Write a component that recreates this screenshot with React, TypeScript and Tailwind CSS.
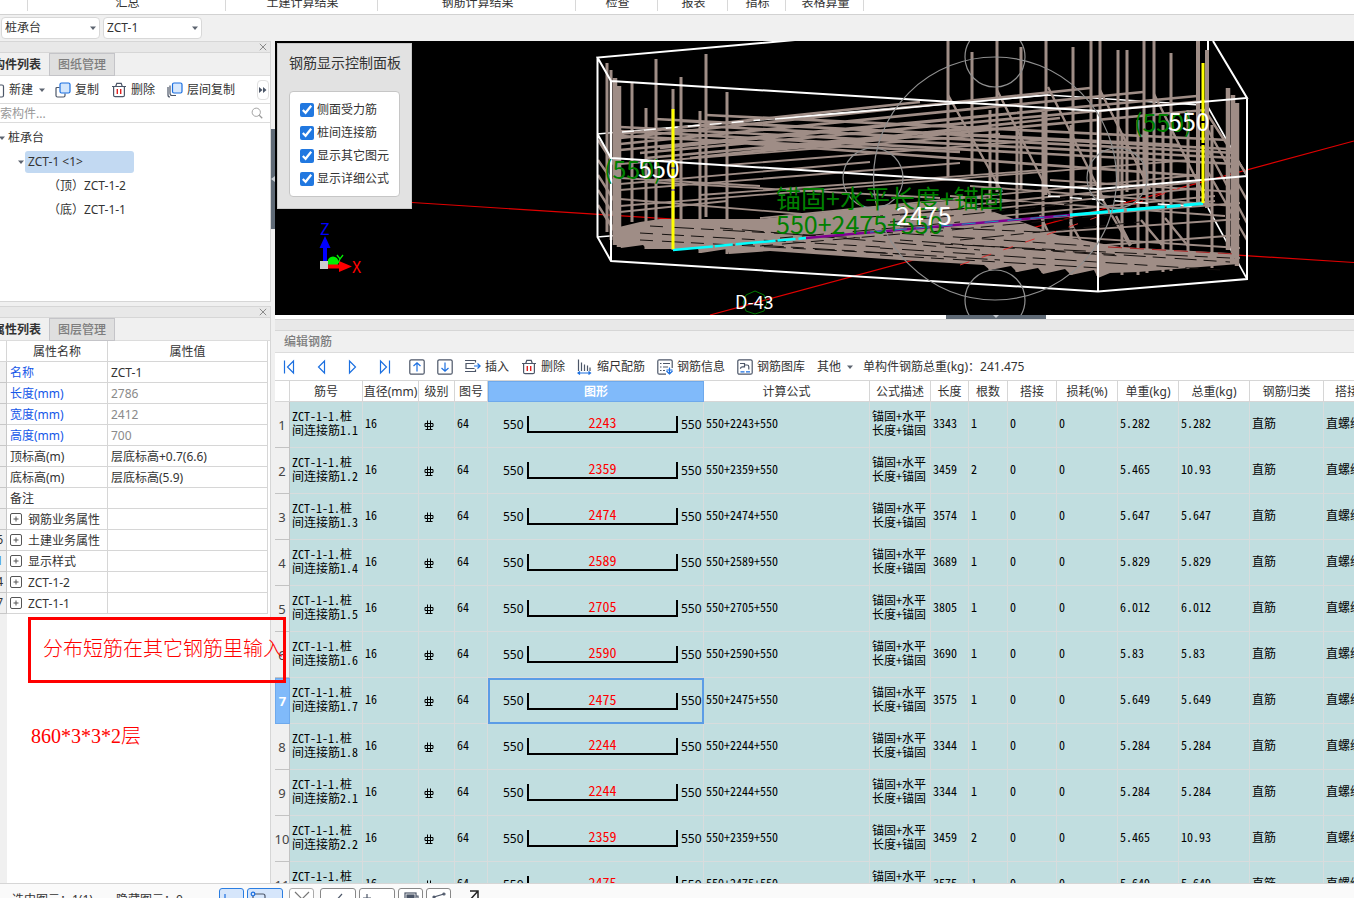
import React from "react";

const UI = "font-['Noto_Sans','Noto_Sans_CJK_SC',sans-serif]";

const ribbon = [
  { label: "", w: "w-7" },
  { label: "汇总", w: "w-[198px]" },
  { label: "土建计算结果", w: "w-[152px]" },
  { label: "钢筋计算结果", w: "w-[198px]" },
  { label: "检查", w: "w-[82px]" },
  { label: "报表", w: "w-[70px]" },
  { label: "指标", w: "w-[58px]" },
  { label: "表格算量", w: "w-[78px]" },
];

type Prop = { no: string; name: string; value: string; kind: "link" | "plain" | "group"; dim?: boolean };
const props: Prop[] = [
  { no: "", name: "名称", value: "ZCT-1", kind: "link" },
  { no: "", name: "长度(mm)", value: "2786", kind: "link", dim: true },
  { no: "", name: "宽度(mm)", value: "2412", kind: "link", dim: true },
  { no: "", name: "高度(mm)", value: "700", kind: "link", dim: true },
  { no: "", name: "顶标高(m)", value: "层底标高+0.7(6.6)", kind: "plain" },
  { no: "", name: "底标高(m)", value: "层底标高(5.9)", kind: "plain" },
  { no: "", name: "备注", value: "", kind: "plain" },
  { no: "", name: "钢筋业务属性", value: "", kind: "group" },
  { no: "16", name: "土建业务属性", value: "", kind: "group" },
  { no: "21", name: "显示样式", value: "", kind: "group" },
  { no: "24", name: "ZCT-1-2", value: "", kind: "group" },
  { no: "27", name: "ZCT-1-1", value: "", kind: "group" },
];

const rows = [
  ["1.1", "2243", "3343", "1", "5.282", "5.282"],
  ["1.2", "2359", "3459", "2", "5.465", "10.93"],
  ["1.3", "2474", "3574", "1", "5.647", "5.647"],
  ["1.4", "2589", "3689", "1", "5.829", "5.829"],
  ["1.5", "2705", "3805", "1", "6.012", "6.012"],
  ["1.6", "2590", "3690", "1", "5.83", "5.83"],
  ["1.7", "2475", "3575", "1", "5.649", "5.649"],
  ["1.8", "2244", "3344", "1", "5.284", "5.284"],
  ["2.1", "2244", "3344", "1", "5.284", "5.284"],
  ["2.2", "2359", "3459", "2", "5.465", "10.93"],
  ["2.3", "2475", "3575", "1", "5.649", "5.649"],
];

const columns = ["筋号", "直径(mm)", "级别", "图号", "图形", "计算公式", "公式描述", "长度", "根数", "搭接", "损耗(%)", "单重(kg)", "总重(kg)", "钢筋归类", "搭接形式"];

function Icon({ children, className = "size-4" }: { children: React.ReactNode; className?: string }) {
  return (
    <svg viewBox="0 0 16 16" className={`${className} shrink-0`} fill="none" stroke="#4c5668" strokeWidth="1.2" aria-hidden="true">
      {children}
    </svg>
  );
}

const Trash = () => (
  <Icon>
    <path d="M1 4.500h14M4.800 4.300L5.800 1.300h4.400l1 3M2.600 4.500v8.700q0 1.500 1.500 1.500h7.800q1.500 0 1.500-1.500V4.500" />
    <path d="M6.300 7v5M9.700 7v5" stroke="#e02020" strokeWidth="1.400" />
  </Icon>
);

const Copy = () => (
  <Icon>
    <path d="M4.500 5.500H2q-1 0-1 1v7q0 1.500 1.500 1.500h6q1.500 0 1.500-1.500v-2" />
    <rect x="5" y="1" width="10" height="10" rx="1.500" fill="#d3e6fc" stroke="#1b6fe0" />
  </Icon>
);

const LayerCopy = () => (
  <Icon>
    <path d="M1 5v8q0 2 2 2M3 3.500v7.500q0 2.500 2 2.500h4" />
    <rect x="5.500" y="1" width="9.500" height="10" rx="1.500" fill="#d9e9fd" stroke="#1b6fe0" />
  </Icon>
);

const Down = () => (
  <svg viewBox="0 0 6 4" className="h-1 w-1.5 shrink-0" aria-hidden="true">
    <path d="M0 .5h6L3 4z" fill="#5d6470" />
  </svg>
);

function PanelTitle() {
  return (
    <div className="flex h-3 items-center justify-end border-y border-[#d6d6d6] bg-[#e8e8e8] pr-[3px]">
      <button aria-label="关闭" className="size-2">
        <svg viewBox="0 0 8 8" className="size-2" stroke="#8a8a8a"><path d="M.8.8l6.400 6.400M7.200.8L.8 7.200" /></svg>
      </button>
    </div>
  );
}

function Tabs({ active, other }: { active: string; other: string }) {
  return (
    <div role="tablist" className="flex h-[23px] border-b border-[#dcdcdc] bg-[#f0f0f0]">
      <button role="tab" aria-selected="true" className="flex w-[49px] items-center justify-end overflow-hidden pt-0.5 pr-2 font-bold whitespace-nowrap">{active}</button>
      <button role="tab" aria-selected="false" className="h-[23px] w-[66px] border border-[#c4c4c8] bg-[#dfdfdf] font-medium text-[#7d7d7d]">{other}</button>
    </div>
  );
}

function Picker({ label, value }: { label: string; value: string }) {
  return (
    <div className="relative h-[22px] w-[99px]">
      <select aria-label={label} className="h-full w-full appearance-none rounded border border-[#d8d8d8] bg-white pl-[3px]">
        <option>{value}</option>
      </select>
      <span className="pointer-events-none absolute inset-y-0 right-1 flex items-center"><Down /></span>
    </div>
  );
}

function ToolButton({ icon, children }: { icon: React.ReactNode; children: React.ReactNode }) {
  return <button className="flex shrink-0 items-center gap-1 whitespace-nowrap">{icon}<span className="pt-px">{children}</span></button>;
}

type Seg = [number, number, number, number];
const lines = (segs: Seg[]) => segs.map(([a, b, c, d]) => `M${a} ${b}L${c} ${d}`).join("");

const leftBars: Seg[] = [
  [607, 63, 607, 232], [611, 70, 611, 240], [632, 82, 632, 222], [646, 108, 646, 249], [656, 59, 656, 221],
  [673, 89, 673, 250], [681, 77, 681, 220], [700, 111, 700, 253], [706, 54, 706, 217], [727, 92, 727, 254],
];
const rightBars: Seg[] = [
  [948, 41, 948, 177], [972, 52, 972, 176], [997, 41, 997, 192], [1021, 47, 1021, 190], [1046, 41, 1046, 195],
  [1073, 47, 1073, 195], [1091, 41, 1091, 190], [1100, 41, 1100, 195], [1118, 50, 1118, 190], [1127, 50, 1127, 192],
  [1144, 41, 1144, 195], [1154, 41, 1154, 200], [1171, 53, 1171, 200], [990, 110, 990, 270], [1017, 130, 1017, 272],
  [1043, 112, 1043, 273], [1071, 125, 1071, 275], [1098, 110, 1098, 276], [1122, 133, 1122, 275], [1138, 120, 1138, 275],
  [1147, 130, 1147, 273], [1163, 125, 1163, 272], [1171, 120, 1171, 271], [1188, 110, 1188, 269], [1212, 125, 1212, 268],
];
const upperMesh: Seg[] = [
  [620, 138, 1090, 88], [620, 144, 1143, 92], [620, 150, 1197, 96], [640, 153, 1205, 101], [727, 154, 1205, 110],
  [620, 134, 920, 102], [660, 148, 1100, 105], [690, 158, 1060, 118],
  [655, 119, 1228, 149], [706, 115, 1228, 140], [620, 127, 1235, 158], [620, 131, 1235, 164], [700, 126, 1235, 153],
  [681, 121, 1180, 145], [727, 142, 1200, 176], [620, 136, 960, 152],
  [646, 158, 980, 128],
];
const midMesh: Seg[] = [
  [620, 164, 1000, 134], [727, 165, 1043, 140],
  [620, 184, 870, 162], [620, 190, 960, 163], [620, 206, 1190, 160], [646, 182, 940, 198], [620, 199, 900, 222],
  [700, 195, 1043, 170], [620, 178, 760, 186], [620, 212, 727, 201], [760, 218, 1197, 175], [800, 222, 1197, 182],
  [820, 226, 1200, 188], [850, 230, 1215, 196], [900, 232, 1215, 201], [950, 196, 1225, 216], [970, 186, 1235, 206],
  [990, 222, 1240, 203], [1010, 235, 1240, 219], [1040, 250, 1240, 235], [990, 232, 1240, 248], [960, 238, 1240, 258],
  [1050, 180, 1235, 192],
];
const depthBars: Seg[] = [
  [948, 95, 1002, 192], [997, 90, 1050, 195], [1048, 87, 1104, 200], [1100, 90, 1150, 190], [1154, 94, 1210, 207],
  [1098, 192, 1130, 246], [1116, 216, 1131, 245], [1141, 220, 1162, 245], [1165, 218, 1188, 246], [990, 222, 1000, 242], [1040, 215, 1052, 240], [1070, 222, 1082, 243],
  [1208, 115, 1247, 175], [1208, 130, 1247, 200], [1208, 150, 1247, 223], [1208, 172, 1247, 240],
  [598, 160, 620, 192], [598, 175, 620, 210], [598, 190, 620, 225], [598, 205, 620, 240], [598, 140, 620, 174],
];
const slits: Seg[] = [
  [650, 226, 860, 238], [640, 233, 880, 247], [640, 240, 900, 254], [720, 228, 980, 250], [740, 244, 1000, 260],
  [880, 232, 1090, 246], [900, 240, 1120, 256], [880, 248, 1220, 270], [940, 244, 1230, 258], [880, 255, 1100, 268],
  [1000, 247, 1230, 262], [760, 246, 900, 234], [780, 238, 960, 222], [900, 226, 1040, 232],
  [890, 222, 1090, 202], [900, 215, 1090, 196], [870, 217, 980, 207], [930, 232, 1120, 214], [960, 240, 1140, 222],
];

function Scene() {
  return (
    <svg viewBox="275 41 1079 274" preserveAspectRatio="xMinYMin slice" className="size-full" fill="none" role="img" aria-label="钢筋三维">
      <path d="M412 202.500L1354 262.500M710 315L1354 141" stroke="#e00000" strokeWidth="1.200" />
      <path d="M597 134L1048 95L1200 105M1208 107L1247 176M1208 208L1247 279M597 237L622 235" stroke="#fff" strokeWidth="1.600" />
      <g stroke="#9f8d86">
        <path d={lines(midMesh)} strokeWidth="1.800" />
        <path d={lines(upperMesh)} strokeWidth="2.700" />
        <path d={lines(depthBars)} strokeWidth="2.400" />
        <path d={lines(leftBars)} strokeWidth="3" />
        <path d={lines(rightBars)} strokeWidth="3" />
        <path d="M615 78V245M619 86V247M1228 88V250M1233 95V258M1237 103V266" strokeWidth="4.500" />
        <path d="M1198 41V205M1207 50V208" strokeWidth="4" />
      </g>
      <path d="M606 215L615 228L640 222L660 219L760 219L880 206L960 200L1000 214L1060 236L1120 247L1230 253L1239 264L1188 268L1138 272L1110 273L1098 278L1094 270L1071 275L1065 269L1043 274L1038 268L1017 272L1011 266L990 270L984 265L900 260L770 251L729 254L727 249L701 253L698 249L647 249L643 245L621 248Z" fill="#9f8d86" />
      <path d={lines(slits)} stroke="#15110f" strokeWidth="1" strokeDasharray="13 9 22 7" />
      <path d="M960 265L1180 188" stroke="#d33" strokeWidth="1" strokeDasharray="10 13" />
      <path d="M1108 247L1235 254" stroke="#a22" strokeWidth="1" strokeDasharray="14 8" />
      <path d="M1048 196L1200 207M622 132L760 120" stroke="#fff" strokeWidth="1.400" strokeDasharray="12 10" />
      <path d="M775 119L920 106.500L1048 95" stroke="#fff" strokeWidth="1.600" />
      <path d="M795 40L597.500 57.500L611 81L1098 111L1247 98L1213 41M1208 41V50M597.500 57V237L611 261L1098 291.500L1247 279V98M611 81V261M1098 111V291M597.500 134L611 158L1098 189L1247 176" stroke="#fff" strokeWidth="2" />
      <path d="M673 250L806 238" stroke="#0ff" strokeWidth="2.500" strokeDasharray="40 2 18 3" />
      <path d="M806 238L1070 215" stroke="#800090" strokeWidth="2.500" />
      <path d="M870 232L1070 215" stroke="#13a0b8" strokeWidth="1" strokeDasharray="14 9" />
      <path d="M1070 215L1203 203.500" stroke="#0ff" strokeWidth="3" strokeDasharray="38 2 14 3" />
      <path d="M673 109V250M1203 63V203" stroke="#ff0" strokeWidth="3" strokeDasharray="58 2 20 2" />
      <g stroke="#8f8f8f" strokeWidth="1.200">
        <circle cx="995" cy="178.500" r="121.500" />
        <circle cx="873" cy="178" r="30" />
        <circle cx="1117" cy="178" r="30" />
        <circle cx="995" cy="57" r="30" />
        <circle cx="995" cy="300" r="30" />
      </g>
      <path d="M755 291L764 295L767 303L764 311L755 314L746 311L743 303L746 295Z" stroke="#007a00" />
      <g className="font-['Noto_Sans_CJK_SC',sans-serif] text-[25px]">
        <g fill="#008000">
          <text x="604" y="179">(550)</text>
          <text x="1134" y="132">(550)</text>
          <text x="776" y="208">锚固+水平长度+锚固</text>
          <text x="776" y="234">550+2475+550</text>
        </g>
        <g fill="#fff">
          <text x="638" y="178">550</text>
          <text x="1168" y="131">550</text>
          <text x="896" y="225">2475</text>
          <text x="735" y="309" className="text-[18px]">D-43</text>
        </g>
      </g>
      <circle cx="333" cy="262" r="5.500" fill="#00f000" />
      <path d="M325 236L330.500 248H327V263H323V248H319.500Z" fill="#00f" />
      <path d="M327 264.500H339V261L352 266.500L339 272V268.500H327Z" fill="#f00" />
      <rect x="320" y="261" width="8" height="8" fill="#ccc" />
      <path d="M337 255L340 259L343 255M340 259L338 263" stroke="#00f000" strokeWidth="1.300" />
      <g className="font-['Noto_Sans_CJK_SC',sans-serif] text-[16px]">
        <text x="320" y="235" fill="#00f">Z</text>
        <text x="352" y="273" fill="#f00">X</text>
      </g>
    </svg>
  );
}

function DisplayPanel() {
  return (
    <section className="absolute top-0.5 left-0.5 w-[135px] border border-[#c8c8c8] bg-[#e2e2e2] px-[11px] pt-[7px] pb-[11px]">
      <h2 className="text-sm leading-6 whitespace-nowrap text-[#333]">钢筋显示控制面板</h2>
      <div className="mt-4 flex flex-col rounded-sm border border-[#c6c6c6] bg-white px-2.5 py-1.5">
        {["侧面受力筋", "桩间连接筋", "显示其它图元", "显示详细公式"].map((t) => (
          <label key={t} className="flex h-[23px] items-center gap-[3px] whitespace-nowrap">
            <input type="checkbox" defaultChecked className="size-3.5 shrink-0 accent-[#2178e0]" />
            <span className="pt-px">{t}</span>
          </label>
        ))}
      </div>
    </section>
  );
}

const half = "font-['Noto_Sans_CJK_SC',sans-serif] [font-feature-settings:'hwid']";

function Num({ children }: { children: React.ReactNode }) {
  return <span className={half}>{children}</span>;
}

function RebarTable() {
  const head = "h-[21px] border-r border-b border-[#d6d6d6] p-0 pt-px text-center font-normal";
  const cell = "border-r border-b border-[#d8dcdd] p-0 pb-[3px] pl-0.5";
  return (
    <table className="w-[1159px] table-fixed border-separate border-spacing-0 whitespace-nowrap">
      <colgroup>
        <col className="w-[15px]" /><col className="w-[73px]" /><col className="w-14" /><col className="w-9" /><col className="w-[33px]" />
        <col className="w-[216px]" /><col className="w-[166px]" /><col className="w-[61px]" /><col className="w-[38px]" /><col className="w-[39px]" />
        <col className="w-[49px]" /><col className="w-[61px]" /><col className="w-[61px]" /><col className="w-[71px]" /><col className="w-[74px]" /><col className="w-[110px]" />
      </colgroup>
      <thead>
        <tr>
          <th className={head} aria-label="行号" />
          {columns.map((c) => (
            <th key={c} className={c === "图形" ? "h-[21px] border border-[#6ea9ec] bg-[#80bafa] p-0 text-center font-bold text-white" : c === "搭接形式" ? "h-[21px] border-b border-[#d6d6d6] p-0 pt-px pl-[11px] text-left font-normal" : head}>{c}</th>
          ))}
        </tr>
      </thead>
      <tbody className="bg-[#c1dee0] font-['Noto_Sans_CJK_SC',sans-serif] leading-[14px] text-black">
        {rows.map(([name, len, total, count, unit, sum], i) => {
          const on = i === 6;
          return (
            <tr key={i} className="h-[46px]">
              <th className={`${UI} ${on ? "border border-[#6ea9ec] bg-[#80bafa] p-0 font-bold text-white" : "border-r border-b border-[#c3c3c3] bg-[#f0f0f0] p-0 font-normal text-[#444]"}`}>
                <div className="-mx-1 text-center text-[13px]">{i + 1}</div>
              </th>
              <td className={cell}><Num>ZCT-1-1.</Num>桩<br />间连接筋<Num>{name}</Num></td>
              <td className={cell}><Num>16</Num></td>
              <td className={cell}>
                <svg viewBox="0 0 10 10" className="mt-1 ml-[3px] size-2.5" fill="none" stroke="#000" aria-label="三级钢">
                  <path d="M1 3.500h8v3H1zM3.500.5v9M6.500.5v9M1.500 9.500h7" />
                </svg>
              </td>
              <td className={cell}><Num>64</Num></td>
              <td className={on ? "border-2 border-[#5b9ce6] p-0" : "border-r border-b border-[#d8dcdd] p-0"}>
                <div className={on ? `flex items-center pl-[13px] ${UI}` : `flex items-center pl-[15px] ${UI}`}>
                  <span className="w-6">550</span>
                  <span className={`h-[17px] w-[151px] border-x-2 border-b-2 border-black text-center text-sm leading-3 text-[#f00] ${half}`}>{len}</span>
                  <span className="pl-[3px]">550</span>
                </div>
              </td>
              <td className={cell}><Num>550+{len}+550</Num></td>
              <td className={cell}>锚固<Num>+</Num>水平<br />长度<Num>+</Num>锚固</td>
              <td className={cell}><Num>{total}</Num></td>
              <td className={cell}><Num>{count}</Num></td>
              <td className={cell}><Num>0</Num></td>
              <td className={cell}><Num>0</Num></td>
              <td className={cell}><Num>{unit}</Num></td>
              <td className={cell}><Num>{sum}</Num></td>
              <td className={cell}>直筋</td>
              <td className={cell}>直螺纹连接</td>
            </tr>
          );
        })}
      </tbody>
    </table>
  );
}

function EditToolbar() {
  const blue = "#1b6fe0";
  return (
    <div className="flex h-7 shrink-0 items-center gap-3 overflow-hidden border-b border-[#d6d6d6] bg-white pl-1.5">
      <div className="flex gap-4">
        <button aria-label="第一条"><Icon><path d="M3.500 1.500v13M12.500 2v12L6.500 8z" stroke={blue} /></Icon></button>
        <button aria-label="上一条"><Icon><path d="M11.500 2v12L5.500 8z" stroke={blue} /></Icon></button>
        <button aria-label="下一条"><Icon><path d="M4.500 2v12l6-6z" stroke={blue} /></Icon></button>
        <button aria-label="最后一条"><Icon><path d="M12.500 1.500v13M3.500 2v12L9.500 8z" stroke={blue} /></Icon></button>
        <button aria-label="上移"><Icon><rect x=".8" y=".8" width="14.400" height="14.400" rx="1.500" /><path d="M8 12.500V4M4.500 7L8 3.800L11.500 7" stroke={blue} /></Icon></button>
      </div>
      <button aria-label="下移"><Icon><rect x=".8" y=".8" width="14.400" height="14.400" rx="1.500" /><path d="M8 3.500V12M4.500 9L8 12.200L11.500 9" stroke={blue} /></Icon></button>
      <ToolButton icon={<Icon><path d="M0 1.500h10.500v2M0 12.500h10.500v-2M9.500 9.500H1v-5h8.500" /><path d="M9 7h6M12.500 4.500L15.200 7l-2.700 2.500" stroke={blue} /></Icon>}>插入</ToolButton>
      <ToolButton icon={<Trash />}>删除</ToolButton>
      <ToolButton icon={<Icon><path d="M1.500.5V12M4.500 3.500V12M7.500 5.500V12M10.500 6.500V12M13 8.500V12" /><path d="M1 14h12.500M3 12.500L1 14l2 1.500M11.500 12.500l2 1.500l-2 1.500" stroke={blue} /></Icon>}>缩尺配筋</ToolButton>
      <ToolButton icon={<Icon><path d="M9 15.200H2.300q-1.500 0-1.500-1.500V2.300Q.8.800 2.300.8h11.400q1.500 0 1.500 1.500V9M3 4.500h1.500M6 4.500h7M3 8h1.500M6 8h5M3 11.500h1.500M6 11.500h2" /><path d="M12.500 8.500V15M9.500 12l3 3l3-3M9.500 11h6" stroke={blue} /></Icon>}>钢筋信息</ToolButton>
      <ToolButton icon={<Icon><rect x=".8" y=".8" width="14.400" height="14.400" rx="1.500" /><path d="M3 4.500h4.500v3.300H5.500q-2 0-2 2M7.500 6h2.500q1.800 0 1.800 1.800V10.500" /><path d="M3.500 12.800h4M9 12.800h4" stroke={blue} /></Icon>}>钢筋图库</ToolButton>
      <button className="flex shrink-0 items-center gap-1.5"><span className="pt-px">其他</span><Down /></button>
      <output className="-ml-0.5 pt-px whitespace-nowrap">单构件钢筋总重(kg)：241.475</output>
    </div>
  );
}

function StatusBar() {
  const box = "flex h-6 shrink-0 items-start justify-center rounded-[3px] border bg-white pt-0.5";
  return (
    <footer className="h-[15px] shrink-0 overflow-hidden border-t border-[#d6d6d6] bg-[#fafafa]">
      <div className="flex items-start gap-[3px] pt-1 pl-3">
        <span className="w-[101px] shrink-0 pt-1 leading-4 whitespace-nowrap">选中图元：1(1)</span>
        <span className="w-[100px] shrink-0 pt-1 leading-4 whitespace-nowrap">隐藏图元：0</span>
        <button aria-label="正交" className="flex h-6 w-[25px] shrink-0 rounded-[3px] border border-[#2a7de1] bg-[#d6e6fb]"><Icon><path d="M5 5v7h9" stroke="#1b6fe0" /></Icon></button>
        <button aria-label="对象捕捉" className="flex h-6 w-9 shrink-0 items-start rounded-[3px] border border-[#2a7de1] bg-[#d6e6fb] pt-0.5 pl-0.5"><Icon><path d="M5 3h8q2 0 2 2v7M3 5v9" /><circle cx="3" cy="3" r="1.800" stroke="#1b6fe0" /></Icon></button>
        <button aria-label="交点" className={`${box} ml-[3px] w-[25px] border-[#aaa]`}><Icon><path d="M1 1l7 7l7-7" stroke="#777" /></Icon></button>
        <button aria-label="垂点" className={`${box} ml-[3px] w-9 border-[#888]`}><Icon><path d="M12 3L4 12" /></Icon></button>
        <button aria-label="中点" className={`${box} w-9 justify-start border-[#888]`}><Icon><path d="M7 3v9M3 7h8" /></Icon></button>
        <button aria-label="顶点" className={`${box} w-[25px] border-[#888]`}><Icon><rect x="2" y="2" width="11" height="10" /><rect x="4" y="4" width="7" height="6" fill="#4c5668" /><path d="M13 5h2v6" /></Icon></button>
        <button aria-label="坐标" className={`${box} w-[25px] border-[#888]`}><Icon><path d="M3 9V6L13 3" /><circle cx="3" cy="6" r="1" /><circle cx="13" cy="3" r="1" /></Icon></button>
        <button aria-label="展开" className="ml-3"><Icon><path d="M3 13L12 3M4 3h8v8" stroke="#222" strokeWidth="1.500" /></Icon></button>
      </div>
    </footer>
  );
}

export default function App() {
  return (
    <div className={`relative flex h-screen flex-col overflow-hidden bg-[#f0f0f0] text-xs text-[#333] ${UI}`}>
      <nav className="flex h-[15px] shrink-0 items-end overflow-hidden border-b border-[#d2d2d2] bg-white pb-[3px]">
        {ribbon.map((r, i) => (
          <div key={i} className={`flex h-6 shrink-0 items-end justify-center border-r border-[#d8d8d8] pl-0.5 leading-4 ${r.w}`}>{r.label}</div>
        ))}
      </nav>
      <div className="flex h-[26px] shrink-0 items-center gap-[3px] px-px">
        <Picker label="构件类型" value="桩承台" />
        <Picker label="构件" value="ZCT-1" />
      </div>

      <div className="flex min-h-0 flex-1">
        <aside className="flex w-[271px] shrink-0 flex-col">
          <section className="flex h-[261px] shrink-0 flex-col overflow-hidden border-r border-b border-[#d6d6d6] bg-white">
            <PanelTitle />
            <Tabs active="构件列表" other="图纸管理" />
            <div className="flex h-7 shrink-0 items-center gap-3 border-b border-[#dcdcdc]">
              <button className="-mr-0.5 -ml-[11px] flex shrink-0 items-center gap-1">
                <Icon><path d="M3 3h10q1.500 0 1.500 1.500v9Q14.500 15 13 15H3M10 3V1" /></Icon>
                <span className="pt-px">新建</span><span className="pl-0.5"><Down /></span>
              </button>
              <ToolButton icon={<Copy />}>复制</ToolButton>
              <ToolButton icon={<Trash />}>删除</ToolButton>
              <ToolButton icon={<LayerCopy />}>层间复制</ToolButton>
              <button aria-label="更多" className="mr-px ml-auto flex h-5 w-3 shrink-0 items-center justify-center rounded border border-[#e0e0e0]">
                <svg viewBox="0 0 8 6" className="h-1.5 w-2 shrink-0" fill="#4c5668"><path d="M0 0l3.500 3L0 6zM4 0l3.500 3L4 6z" /></svg>
              </button>
            </div>
            <div className="flex h-[19px] shrink-0 items-center border-b border-[#dcdcdc] pr-[7px]">
              <input aria-label="搜索构件" placeholder="搜索构件..." className="-ml-3 min-w-0 flex-1 pt-px outline-none placeholder:text-[#999]" />
              <Icon className="size-3"><circle cx="7" cy="7" r="5.500" stroke="#999" /><path d="M11 11l4 4" stroke="#999" strokeWidth="1.600" /></Icon>
            </div>
            <ul className="pt-[3px] leading-6 whitespace-nowrap">
              <li className="flex items-center gap-[3px] pl-px"><span className="-ml-0.5"><Down /></span>桩承台</li>
              <li className="flex items-center gap-px pl-[18px]"><Down /><span className="my-px w-[109px] rounded-[3px] bg-[#c2d9f2] pl-[3px] leading-[22px]">ZCT-1 &lt;1&gt;</span></li>
              <li className="pl-12">（顶）ZCT-1-2</li>
              <li className="pl-12">（底）ZCT-1-1</li>
            </ul>
          </section>

          <section className="mt-1 flex min-h-0 flex-1 flex-col overflow-hidden border-r border-[#d6d6d6] bg-white">
            <PanelTitle />
            <Tabs active="属性列表" other="图层管理" />
            <div className="flex min-h-0 flex-1 flex-col">
              <table className="w-[268px] table-fixed border-separate border-spacing-0 whitespace-nowrap">
                <colgroup><col className="w-[7px]" /><col className="w-[101px]" /><col className="w-40" /></colgroup>
                <thead>
                  <tr className="h-[21px]">
                    <th className="border-r border-b border-[#d6d6d6] p-0" aria-label="行号" />
                    <th className="border-r border-b border-[#d6d6d6] p-0 pt-px text-center font-normal">属性名称</th>
                    <th className="border-r border-b border-[#d6d6d6] p-0 pt-px text-center font-normal">属性值</th>
                  </tr>
                </thead>
                <tbody>
                  {props.map((p) => (
                    <tr key={p.name} className="h-[21px]">
                      <td className="overflow-hidden border-r border-b border-[#c8c8c8] bg-[#f0f0f0] p-0">
                        <div className={`flex w-[3px] justify-end ${p.no === "21" ? "text-[#3b82d8]" : ""}`}>{p.no}</div>
                      </td>
                      <td className={`border-r border-b border-[#d6d6d6] p-0 pt-0.5 pl-[3px] leading-[18px] ${p.kind === "link" ? "text-[#1557e8]" : ""}`}>
                        {p.kind === "group" ? (
                          <span className="flex items-center gap-1.5">
                            <button aria-label={`展开${p.name}`} className="-mt-0.5 size-3">
                              <svg viewBox="0 0 12 12" className="size-3" fill="none" stroke="#555"><rect x=".5" y=".5" width="11" height="11" rx="1.500" /><path d="M3.500 6h5M6 3.500v5" /></svg>
                            </button>
                            {p.name}
                          </span>
                        ) : p.name}
                      </td>
                      <td className={`border-r border-b border-[#d6d6d6] p-0 pt-0.5 pl-[3px] leading-[18px] ${p.dim ? "text-[#8a8a8a]" : ""}`}>{p.value}</td>
                    </tr>
                  ))}
                </tbody>
              </table>
              <div className="w-[7px] flex-1 bg-[#f0f0f0]" />
            </div>
          </section>
        </aside>

        <div className="w-1 shrink-0 pt-[88px]">
          <button aria-label="收起左侧面板" className="flex h-[100px] w-1 items-center bg-[#5f6a76]">
            <svg viewBox="0 0 4 6" className="h-1.5 w-1" fill="#c8cdd3"><path d="M4 0v6L0 3z" /></svg>
          </button>
        </div>

        <main className="flex min-w-0 flex-1 flex-col">
          <div className="relative h-[274px] shrink-0 bg-black">
            <Scene />
            <DisplayPanel />
          </div>
          <div className="flex h-1 shrink-0 bg-white pl-[671px]">
            <button aria-label="收起编辑钢筋" className="flex h-1 w-[100px] items-center justify-center bg-[#5f6a76]">
              <svg viewBox="0 0 6 4" className="h-1 w-1.5" fill="#c8cdd3"><path d="M0 0h6L3 3z" /></svg>
            </button>
          </div>
          <div className="h-3 shrink-0 border-y border-[#d6d6d6] bg-[#e8e8e8]" />
          <h2 className="h-[22px] shrink-0 border-b border-[#dcdcdc] bg-[#f0f0f0] pl-[9px] leading-[21px] font-medium text-[#7d7d7d]">编辑钢筋</h2>
          <EditToolbar />
          <div className="min-h-0 flex-1 overflow-hidden bg-white"><RebarTable /></div>
        </main>
      </div>
      <StatusBar />

      <div className="pointer-events-none absolute top-[617px] left-7 h-[66px] w-[258px] border-[3px] border-[#f00] pl-3 text-xl leading-[58px] font-light whitespace-nowrap text-[#f00]">分布短筋在其它钢筋里输入</div>
      <div className="pointer-events-none absolute top-[720px] left-[31px] font-['Liberation_Serif','Noto_Sans_CJK_SC',serif] text-xl leading-8 font-light whitespace-nowrap text-[#f00]">860*3*3*2层</div>
    </div>
  );
}
